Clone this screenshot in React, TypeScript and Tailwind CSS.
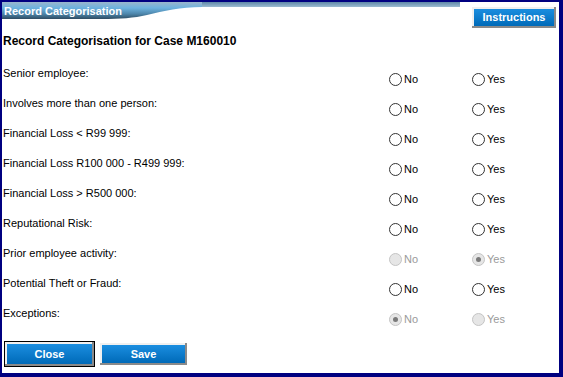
import React from "react";

type RowState = "normal" | "disabledYes" | "disabledNo";

const rows: { label: string; state: RowState }[] = [
  { label: "Senior employee:", state: "normal" },
  { label: "Involves more than one person:", state: "normal" },
  { label: "Financial Loss < R99 999:", state: "normal" },
  { label: "Financial Loss R100 000 - R499 999:", state: "normal" },
  { label: "Financial Loss > R500 000:", state: "normal" },
  { label: "Reputational Risk:", state: "normal" },
  { label: "Prior employee activity:", state: "disabledYes" },
  { label: "Potential Theft or Fraud:", state: "normal" },
  { label: "Exceptions:", state: "disabledNo" },
];

function Radio({ label, disabled, checked }: { label: string; disabled?: boolean; checked?: boolean }) {
  return (
    <div className="flex items-center">
      <span
        className={
          "relative flex h-[13px] w-[13px] items-center justify-center rounded-full border " +
          (disabled ? "border-[#c4c4c4] bg-[#e6e6e6]" : "border-[#333] bg-white")
        }
      >
        {checked && <span className="h-[5px] w-[5px] rounded-full bg-[#7a7a7a]" />}
      </span>
      <span className={"ml-[2px] text-[11px] " + (disabled ? "text-[#9a9a9a]" : "text-black")}>{label}</span>
    </div>
  );
}

function BlueButton({ children, focused, className }: { children: React.ReactNode; focused?: boolean; className?: string }) {
  return (
    <div className={(focused ? "border border-black " : "border border-transparent ") + className}>
      <div className="h-full w-full border-b-2 border-r-2 border-[#8a8a8a]">
        <div className="flex h-full w-full items-center justify-center border-l-2 border-t-2 border-[#f0f0f0] bg-gradient-to-b from-[#1a8ee0] to-[#006ab8] text-[11px] font-bold text-white">
          {children}
        </div>
      </div>
    </div>
  );
}

export default function App() {
  return (
    <div
      className="flex h-[377px] w-[563px] flex-col border-b-4 border-l-2 border-r-4 border-t-2 border-[#000080] bg-white"
      style={{ fontFamily: '"Liberation Sans", Arial, sans-serif' }}
    >
      <div className="relative flex h-[27px] shrink-0 items-start justify-between">
        <svg className="absolute left-0 top-0" width="458" height="17" viewBox="0 0 458 17">
          <defs>
            <linearGradient id="hg" x1="0" y1="0" x2="0" y2="1">
              <stop offset="0" stopColor="#9ab6cc" />
              <stop offset="0.35" stopColor="#6db3df" />
              <stop offset="0.7" stopColor="#4d86ab" />
              <stop offset="1" stopColor="#2e4c62" />
            </linearGradient>
            <linearGradient id="sg" x1="0" y1="0" x2="0" y2="1">
              <stop offset="0" stopColor="#5f88a8" />
              <stop offset="1" stopColor="#9bbbd2" />
            </linearGradient>
          </defs>
          <rect x="0" y="0" width="458" height="5" fill="url(#sg)" />
          <path d="M0 0 H200 V5 C178 5 162 9 145 13 C132 16 118 17 100 17 H0 Z" fill="url(#hg)" />
        </svg>
        <div className="relative pl-[2px] pt-[3px] text-[11px] font-bold leading-[12px] text-white">Record Categorisation</div>
        <BlueButton className="relative mr-[2px] mt-[4px] h-[23px] w-[86px]">Instructions</BlueButton>
      </div>
      <div className="mt-[3px] pl-[1px] text-[12px] font-bold text-black">Record Categorisation for Case M160010</div>
      <div className="mt-[15px] flex flex-col">
        {rows.map((r) => (
          <div key={r.label} className="grid h-[30px] grid-cols-[387px_83px_auto]">
            <div className="pl-[1px] text-[11px] leading-[16px] text-black">{r.label}</div>
            <div className="pt-[6px]">
              <Radio label="No" disabled={r.state !== "normal"} checked={r.state === "disabledNo"} />
            </div>
            <div className="pt-[6px]">
              <Radio label="Yes" disabled={r.state !== "normal"} checked={r.state === "disabledYes"} />
            </div>
          </div>
        ))}
      </div>
      <div className="mt-auto mb-[6px] flex gap-[4px] pl-[2px]">
        <BlueButton focused className="h-[26px] w-[91px]">Close</BlueButton>
        <BlueButton className="mt-[1px] h-[24px] w-[89px]">Save</BlueButton>
      </div>
    </div>
  );
}
